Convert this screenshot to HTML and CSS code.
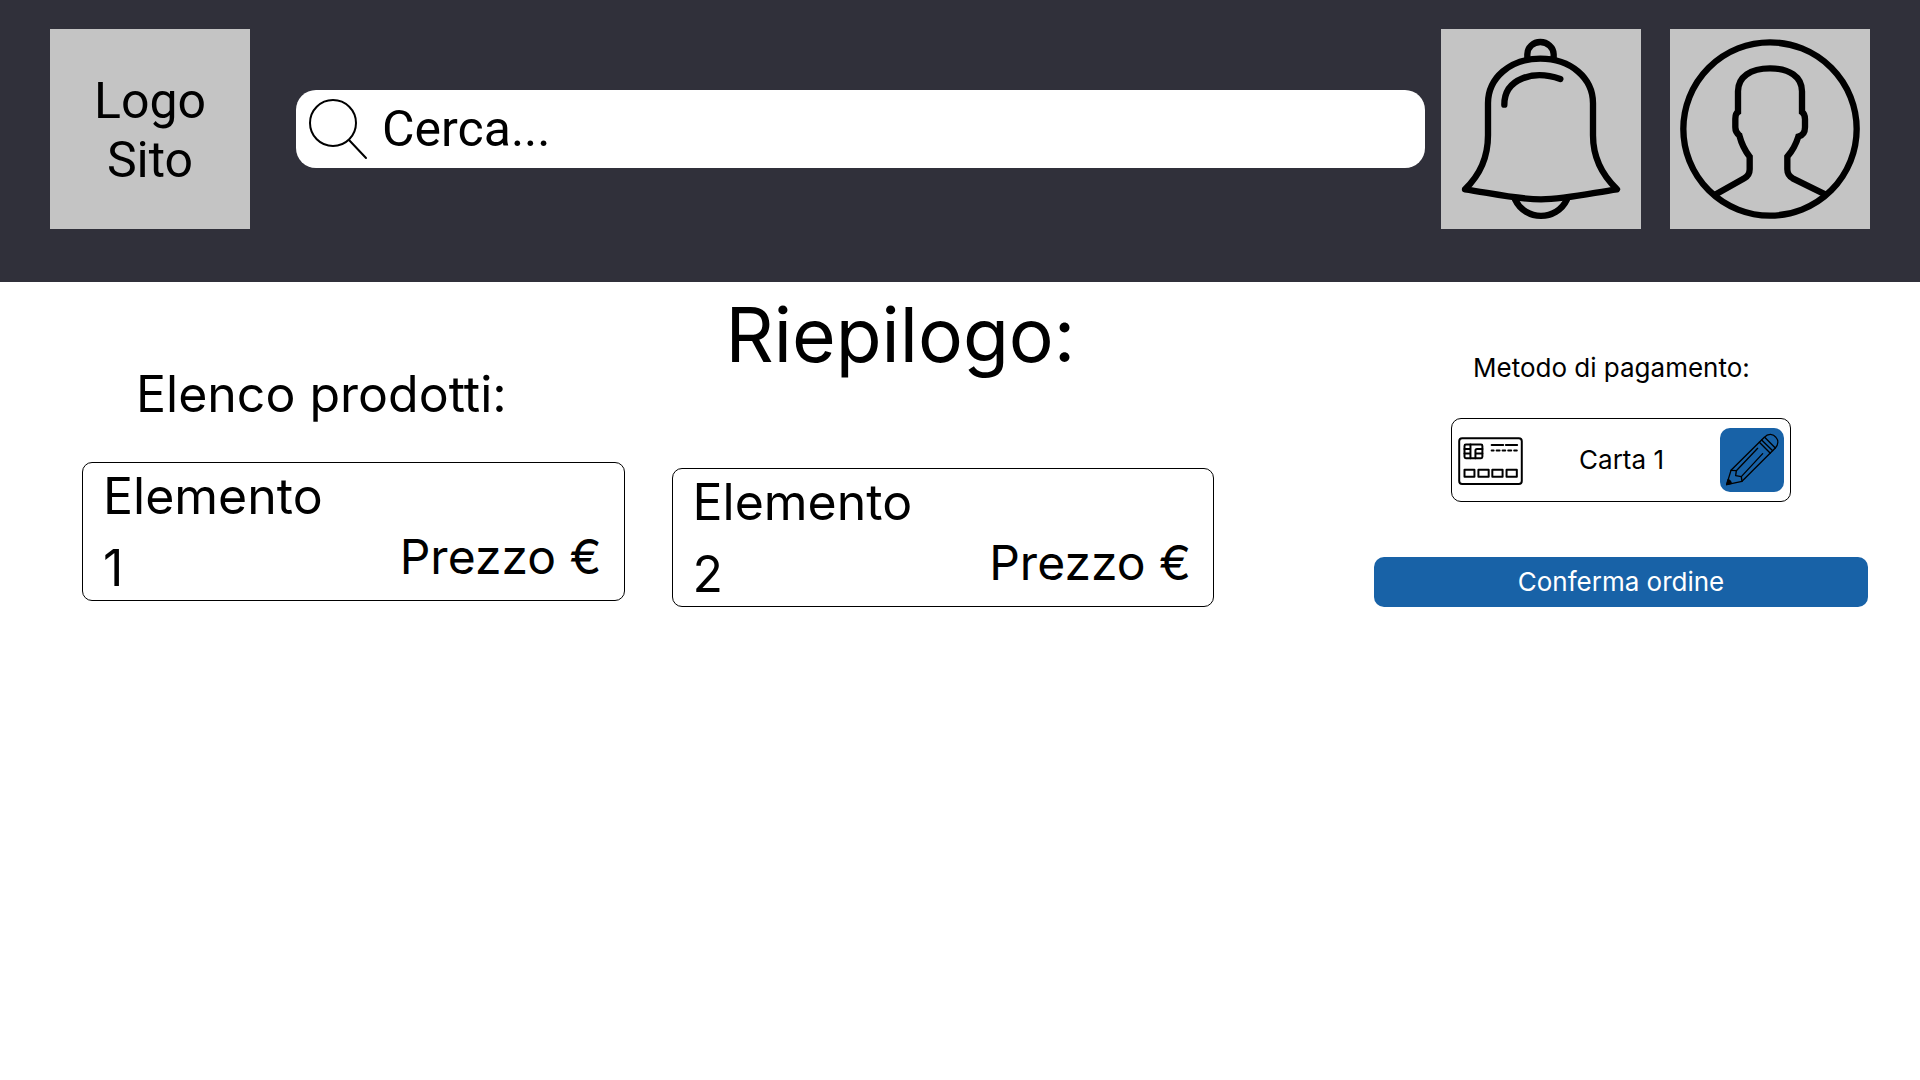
FILE: index.html
```html
<!DOCTYPE html>
<html lang="it">
<head>
  <meta charset="utf-8">
  <meta name="viewport" content="width=device-width, initial-scale=1">
  <title>Riepilogo</title>
  <link rel="stylesheet" href="styles.css">
</head>
<body>
  <header class="topbar">
    <a class="tile logo" href="#">Logo Sito</a>
    <form class="search" role="search">
      <label class="search-label" for="cerca" aria-label="Cerca">
        <svg class="search-icon" viewBox="0 0 60 62" aria-hidden="true">
          <circle cx="25" cy="25" r="23"/>
          <path d="M41 42L58 60"/>
        </svg>
      </label>
      <input class="search-input" id="cerca" type="text" placeholder="Cerca...">
    </form>
    <nav class="actions">
      <button class="tile" type="button" aria-label="Notifiche">
        <svg class="tile-icon" viewBox="63 57 600 600" aria-hidden="true">
          <path d="M322 143V133C322 112 340 96 361 96S401 112 401 133V143"/>
          <path d="M135 538C178 497 204 445 204 376V280C204 204 270 146 361 146S519 204 519 280V376C519 445 548 497 591 538C520 548 440 568 363 568S206 548 135 538Z"/>
          <path d="M253 284C253 205 340 179 421 207"/>
          <path d="M285 568C316 634 410 634 441 568"/>
        </svg>
      </button>
      <button class="tile" type="button" aria-label="Profilo">
        <svg class="tile-icon" viewBox="60 57 600 600" aria-hidden="true">
          <circle cx="360" cy="357" r="260"/>
          <path class="butt" d="M195 554L283 505Q299 496 299 478V440C284 421 274 399 268 376Q256 368 256 352V326Q256 311 264 306V244C264 200 302 175 360 175S456 200 456 244V306Q465 312 465 328V352Q465 375 445 380C438 403 427 423 412 440V478Q412 496 428 505L527 554"/>
        </svg>
      </button>
    </nav>
  </header>

  <main class="page">
    <div class="products">
      <section class="column column-list">
        <h2 class="list-title">Elenco prodotti:</h2>
        <article class="product">
          <h3 class="product-name">Elemento 1</h3>
          <p class="product-price">Prezzo €</p>
        </article>
      </section>
      <section class="column">
        <h1 class="page-title">Riepilogo:</h1>
        <article class="product">
          <h3 class="product-name">Elemento 2</h3>
          <p class="product-price">Prezzo €</p>
        </article>
      </section>
    </div>

    <aside class="checkout">
      <section class="payment">
        <h2 class="payment-title">Metodo di pagamento:</h2>
        <div class="payment-card">
          <svg class="card-icon" viewBox="54 78 195 151" aria-hidden="true">
            <rect class="card-frame" x="57" y="88" width="189" height="138" rx="9"/>
            <rect x="73" y="107" width="54" height="41" rx="4"/>
            <path d="M73 120H91M73 134H91M91 107V148M106 148V125Q106 120 111 120H127M106 134H127"/>
            <path d="M155 108H190M198 108H232"/>
            <path d="M155 125H161M170 125H179M188 125H196M205 125H214M223 125H231"/>
            <path d="M73 183H103V204H73ZM115 183H146V204H115ZM157 183H188V204H157ZM200 183H231V204H200Z"/>
          </svg>
          <span class="payment-name">Carta 1</span>
          <button class="edit" type="button" aria-label="Modifica">
            <svg class="edit-icon" viewBox="60 54 192 192" aria-hidden="true">
              <path d="M80 224L93 181L193 82C204 69 220 71 228 82C236 91 235 104 226 114L126 214Z"/>
              <path d="M93 181L109 182L107 197L124 200L126 214"/>
              <path d="M109 182L173 115M124 200L188 131"/>
              <path d="M178 97L211 130M185 90L218 122M194 82L226 114"/>
              <path class="edit-tip" d="M80 224L84 209Q92 211 94 220Z"/>
            </svg>
          </button>
        </div>
      </section>
      <button class="confirm" type="button">Conferma ordine</button>
    </aside>
  </main>
</body>
</html>
```
FILE: styles.css
```css
* {
  box-sizing: border-box;
}

body {
  margin: 0;
  background: #fff;
  color: #000;
  font-family: Inter, "Open Sans", sans-serif;
}

h1, h2, h3, p {
  margin: 0;
  font-weight: 400;
}

button {
  border: 0;
  padding: 0;
  font: inherit;
  color: inherit;
  cursor: pointer;
}

svg {
  display: block;
  fill: none;
  stroke: #000;
  stroke-linecap: round;
  stroke-linejoin: round;
}

.topbar {
  display: flex;
  align-items: center;
  padding: 29px 50px 53px;
  background: #30303a;
  font-family: Roboto, sans-serif;
}

.tile {
  flex: none;
  width: 200px;
  height: 200px;
  background: #c4c4c4;
}

.logo {
  display: flex;
  align-items: center;
  padding: 4px 40px 0;
  color: #000;
  font-size: 50px;
  line-height: 59px;
  text-align: center;
  text-decoration: none;
}

.tile-icon {
  width: 100%;
  height: 100%;
  stroke-width: 19;
}

.butt {
  stroke-linecap: butt;
  stroke-linejoin: miter;
}

.search {
  display: flex;
  flex: 1;
  align-items: center;
  gap: 14px;
  height: 78px;
  margin: 0 16px 0 46px;
  padding: 0 16px 0 12px;
  border-radius: 20px;
  background: #fff;
}

.search-icon {
  width: 60px;
  height: 62px;
  stroke-width: 2;
}

.search-input {
  flex: 1;
  min-width: 0;
  border: 0;
  padding: 0;
  outline: 0;
  background: none;
  font-family: inherit;
  font-size: 50px;
  line-height: 59px;
}

.search-input::placeholder {
  color: #000;
  opacity: 1;
}

.actions {
  display: flex;
  gap: 29px;
}

.page {
  display: flex;
  gap: 160px;
  padding: 0 52px 0 82px;
}

.products {
  display: grid;
  flex: 1132 1 0;
  grid-template-columns: 1fr 1fr;
  align-items: start;
  gap: 47px;
}

.column-list {
  padding-top: 76px;
}

.list-title {
  margin-bottom: 32px;
  padding-left: 54px;
  font-size: 50px;
  line-height: 72px;
}

.page-title {
  margin-bottom: 80px;
  padding-left: 54px;
  font-size: 75px;
  line-height: 106px;
}

.product {
  display: flex;
  align-items: center;
  justify-content: space-between;
  height: 139px;
  padding: 0 22px 0 20px;
  border: 1px solid #000;
  border-radius: 10px;
}

.product-name {
  width: 240px;
  font-size: 50px;
  line-height: 72px;
}

.product-price {
  padding-top: 50px;
  font-size: 48px;
  line-height: 72px;
}

.checkout {
  display: flex;
  flex: 494 1 0;
  flex-direction: column;
  align-items: center;
  padding-top: 68px;
  font-size: 26px;
  line-height: 36px;
}

.payment {
  width: 340px;
}

.payment-title {
  margin-bottom: 32px;
  padding-left: 22px;
  font-size: 26px;
}

.payment-card {
  display: flex;
  align-items: center;
  justify-content: space-between;
  height: 84px;
  padding: 0 6px;
  border: 1px solid #000;
  border-radius: 10px;
}

.card-icon {
  width: 65px;
  height: 50px;
  stroke-width: 6;
}

.edit {
  width: 64px;
  height: 64px;
  border-radius: 10px;
  background: #1862a7;
}

.edit-icon {
  width: 64px;
  height: 64px;
  stroke-width: 4;
}

.edit-tip {
  fill: #000;
}

.confirm {
  width: 100%;
  height: 50px;
  margin-top: 55px;
  border-radius: 10px;
  background: #1862a7;
  color: #fff;
}
```
